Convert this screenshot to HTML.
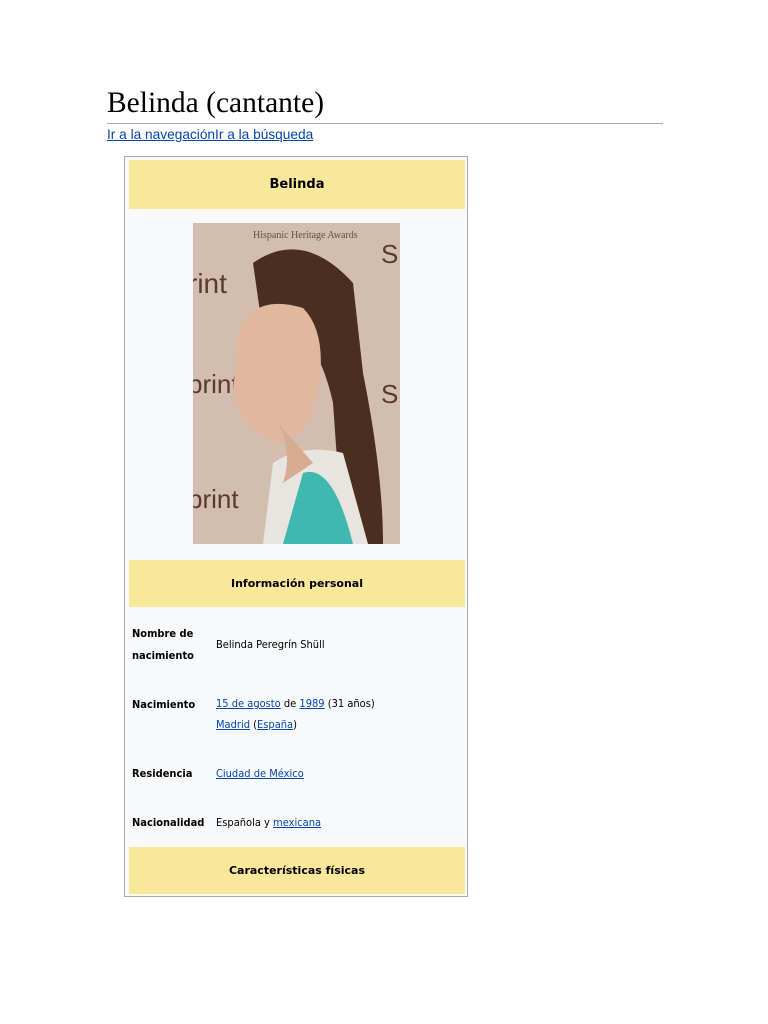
<!DOCTYPE html>
<html><head><meta charset="utf-8"><style>
body{margin:0;background:#fff;width:768px;height:1024px;position:relative;font-family:"Liberation Sans",sans-serif;}
.a{position:absolute}
h1{position:absolute;left:107px;top:87px;margin:0;font:400 29.5px "Liberation Serif",serif;color:#000;}
.rule{left:107px;top:123px;width:556px;height:1px;background:#a2a9b1}
.nav{left:107px;top:127px;font-size:13.7px;color:#0645ad;text-decoration:underline}
.box{left:124px;top:156px;width:342px;height:739px;border:1px solid #a2a9b1;background:#f8f9fa}
.hd{position:absolute;left:4px;width:336px;background:#f9e79a;text-align:center;font-family:"DejaVu Sans",sans-serif;font-weight:bold;color:#000}
.l{position:absolute;left:7px;font:bold 11px "DejaVu Sans Condensed","DejaVu Sans",sans-serif;line-height:22px;color:#000}
.v{position:absolute;left:91px;font:11px "DejaVu Sans Condensed","DejaVu Sans",sans-serif;line-height:21px;color:#000}
.v a{color:#0645ad;text-decoration:underline}
</style></head><body>
<h1>Belinda (cantante)</h1>
<div class="a rule"></div>
<div class="a nav">Ir a la navegaciónIr a la búsqueda</div>
<div class="a box">
 <div class="hd" style="top:3px;height:49px;line-height:49px;font-size:13px">Belinda</div>
 <svg class="a" style="left:68px;top:66px" width="207" height="321" viewBox="0 0 207 321">
  <rect width="207" height="321" fill="#cdb5a4"/>
  <rect x="0" y="0" width="207" height="321" fill="#d6c3b6" opacity=".6"/>
  <text x="60" y="15" font-size="10" fill="#6a4f40" font-family="Liberation Serif">Hispanic Heritage Awards</text>
  <text x="-5" y="70" font-size="28" fill="#5a3a30" font-family="Liberation Sans">rint</text>
  <text x="-5" y="170" font-size="26" fill="#5a3a30" font-family="Liberation Sans">print</text>
  <text x="-5" y="285" font-size="26" fill="#5a3a30" font-family="Liberation Sans">print</text>
  <text x="188" y="40" font-size="26" fill="#5a3a30">S</text>
  <text x="188" y="180" font-size="26" fill="#5a3a30">S</text>
  <path d="M60 40 Q110 5 160 60 L170 150 Q190 250 190 321 L150 321 L140 180 Q120 90 70 110 Z" fill="#4a2e20"/>
  <path d="M45 110 Q60 70 110 85 Q135 110 125 170 Q115 215 85 220 Q50 210 40 170 Z" fill="#e0b8a0"/>
  <path d="M80 240 Q110 220 150 230 L175 321 L70 321 Z" fill="#e8e4df"/>
  <path d="M110 250 Q140 240 160 321 L90 321 Z" fill="#3fb9b0"/>
  <path d="M85 200 Q100 230 90 260 L120 240 Z" fill="#d8ab93"/>
 </svg>
 <div class="hd" style="top:403px;height:47px;line-height:47px;font-size:11px">Información personal</div>
 <div class="l" style="top:466px">Nombre de<br>nacimiento</div>
 <div class="v" style="top:477px">Belinda Peregrín Shüll</div>
 <div class="l" style="top:537px">Nacimiento</div>
 <div class="v" style="top:536px"><a>15 de agosto</a> de <a>1989</a> (31 años)<br><a>Madrid</a> (<a>España</a>)</div>
 <div class="l" style="top:606px">Residencia</div>
 <div class="v" style="top:606px"><a>Ciudad de México</a></div>
 <div class="l" style="top:655px">Nacionalidad</div>
 <div class="v" style="top:655px">Española y <a>mexicana</a></div>
 <div class="hd" style="top:690px;height:47px;line-height:47px;font-size:11px">Características físicas</div>
</div>
</body></html>
